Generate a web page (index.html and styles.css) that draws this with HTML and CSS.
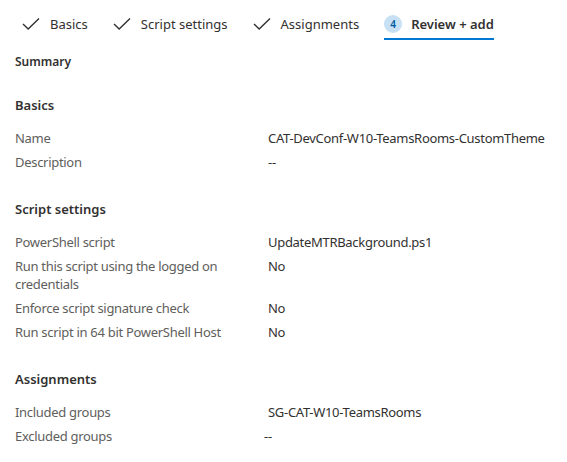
FILE: index.html
```
<!DOCTYPE html>
<html lang="en">
<head>
    <meta charset="UTF-8">
    <meta name="viewport" content="width=device-width, initial-scale=1.0">
    <title>Review + add</title>
    <link rel="stylesheet" href="styles.css">
</head>
<body>
    <!-- wizard steps -->
    <div class="steps">
        <div class="step">
            <svg class="check" width="18" height="12" viewBox="0 0 18 12"><path d="M1 6 L6.2 11 L17 0.6" /></svg>
            <span>Basics</span>
        </div>
        <div class="step">
            <svg class="check" width="18" height="12" viewBox="0 0 18 12"><path d="M1 6 L6.2 11 L17 0.6" /></svg>
            <span>Script settings</span>
        </div>
        <div class="step">
            <svg class="check" width="18" height="12" viewBox="0 0 18 12"><path d="M1 6 L6.2 11 L17 0.6" /></svg>
            <span>Assignments</span>
        </div>
        <div class="step active">
            <span class="step-num">4</span>
            <span>Review + add</span>
        </div>
    </div>

    <div class="content">
        <div class="summary">Summary</div>

        <h2 class="section-title">Basics</h2>
        <div class="rows">
            <div class="label">Name</div>
            <div class="value">CAT-DevConf-W10-TeamsRooms-CustomTheme</div>
            <div class="label">Description</div>
            <div class="value">--</div>
        </div>

        <h2 class="section-title">Script settings</h2>
        <div class="rows">
            <div class="label">PowerShell script</div>
            <div class="value">UpdateMTRBackground.ps1</div>
            <div class="label">Run this script using the logged on credentials</div>
            <div class="value">No</div>
            <div class="label">Enforce script signature check</div>
            <div class="value">No</div>
            <div class="label">Run script in 64 bit PowerShell Host</div>
            <div class="value">No</div>
        </div>

        <h2 class="section-title">Assignments</h2>
        <div class="rows">
            <div class="label">Included groups</div>
            <div class="value">SG-CAT-W10-TeamsRooms</div>
            <div class="label">Excluded groups</div>
            <div class="value empty">--</div>
        </div>
    </div>
</body>
</html>
```

FILE: styles.css
```
body {
    margin: 0;
    background: #fff;
    color: #323130;
    font-family: "Noto Sans", "Open Sans", sans-serif;
}
.steps {
    display: flex;
    gap: 25px;
    padding-left: 22px;
}
.step {
    display: flex;
    align-items: center;
    gap: 10px;
    padding: 14px 0 4px;
    line-height: 20px;
    font-size: 13px;
    border-bottom: 2px solid transparent;
}
.step.active {
    border-bottom-color: #0078d4;
    font-weight: 600;
    gap: 9px;
}
.check {
    fill: none;
    stroke: #323130;
    stroke-width: 1.4;
}
.step-num {
    width: 18px;
    height: 18px;
    border-radius: 50%;
    background: #c7e0f4;
    color: #005a9e;
    font-size: 10px;
    line-height: 18px;
    text-align: center;
}
.content {
    padding-left: 15px;
}
.summary {
    margin-top: 12px;
    font-size: 12px;
    font-weight: 600;
    line-height: 20px;
}
.section-title {
    margin: 23px 0 11px;
    font-size: 13px;
    font-weight: 600;
    line-height: 20px;
}
.section-title + .rows + .section-title {
    margin-top: 25px;
}
.rows {
    display: grid;
    grid-template-columns: 253px 1fr;
    font-size: 13px;
    line-height: 18px;
    letter-spacing: -0.3px;
}
.label {
    padding: 3px 20px 3px 0;
    color: #605e5c;
}
.value {
    padding: 3px 0;
}
.value.empty {
    margin-left: -4px;
}
```
